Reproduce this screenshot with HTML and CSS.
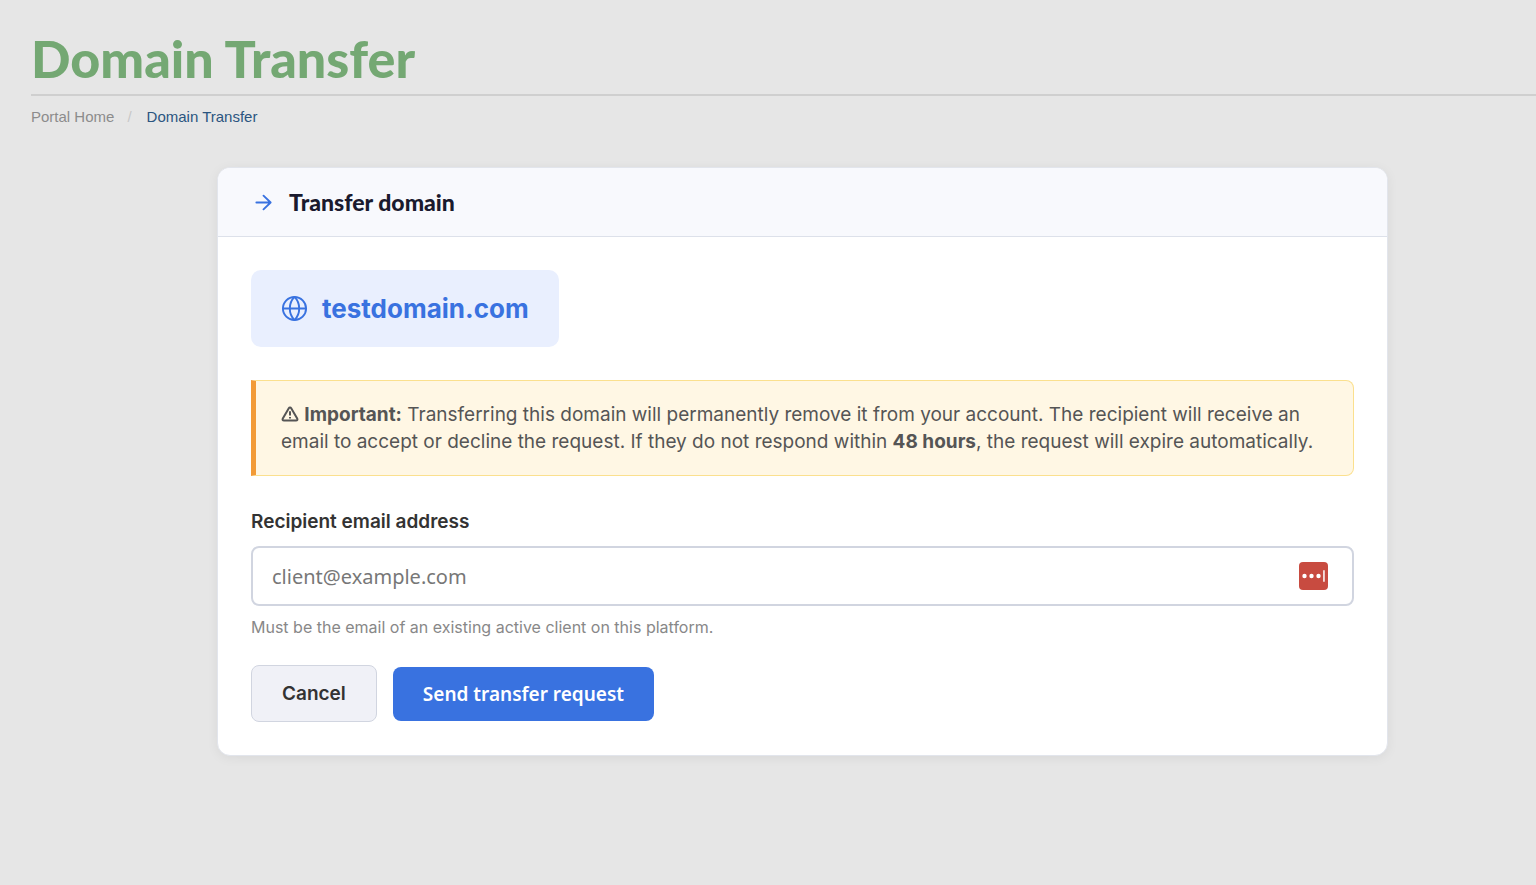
FILE: index.html
```html
<!DOCTYPE html>
<html lang="en">
<head>
<meta charset="utf-8">
<meta name="viewport" content="width=device-width, initial-scale=1">
<title>Domain Transfer</title>
<link rel="stylesheet" href="styles.css">
</head>
<body>
<header class="page-header">
  <h1 class="page-title">Domain Transfer</h1>
  <nav class="breadcrumb" aria-label="Breadcrumb">
    <a class="breadcrumb-link" href="#">Portal Home</a>
    <span class="breadcrumb-separator">/</span>
    <a class="breadcrumb-link breadcrumb-current" href="#" aria-current="page">Domain Transfer</a>
  </nav>
</header>
<main class="content">
  <section class="card">
    <div class="card-header">
      <svg class="arrow-icon" viewBox="0 0 20 20" aria-hidden="true"><path d="M2.500 10h15M10 2.800l7.500 7.200-7.500 7.200"/></svg>
      <h2 class="card-title">Transfer domain</h2>
    </div>
    <form class="card-body">
      <div class="domain">
        <svg class="globe-icon" viewBox="0 0 28 28" aria-hidden="true"><circle cx="14" cy="14" r="12"/><path d="M2 14h24M14 2c-6.500 6.500-6.500 17.500 0 24M14 2c6.500 6.500 6.500 17.500 0 24"/></svg>
        <span class="domain-name">testdomain.com</span>
      </div>
      <p class="notice">
        <svg class="warning-icon" viewBox="0 0 18 16" aria-hidden="true"><path class="warning-outline" d="M9 1.500c.5 0 .9.200 1.200.700l6 10.300c.6 1.100.1 2-1.200 2H3c-1.300 0-1.800-.9-1.200-2l6-10.300c.3-.5.700-.7 1.200-.7z"/><path class="warning-mark" d="M9 5.200v4.300M9 11v1.500"/></svg>
        <strong>Important:</strong> Transferring this domain will permanently remove it from your account. The recipient will receive an email to accept or decline the request. If they do not respond within <strong>48 hours</strong>, the request will expire automatically.
      </p>
      <div class="field">
        <label class="field-label" for="recipient">Recipient email address</label>
        <div class="input-wrap">
          <input class="field-input" id="recipient" type="email" placeholder="client@example.com" aria-describedby="recipient-hint">
          <button class="password-button" type="button" aria-label="Fill from password manager">
            <svg class="password-icon" viewBox="0 0 28 28" aria-hidden="true"><circle cx="5" cy="14" r="2.200"/><circle cx="12" cy="14" r="2.200"/><circle cx="19" cy="14" r="2.200"/><path d="M23.700 8.300h1.500v11.400h-1.500z"/></svg>
          </button>
        </div>
        <p class="field-hint" id="recipient-hint">Must be the email of an existing active client on this platform.</p>
      </div>
      <div class="actions">
        <button class="button button-cancel" type="button">Cancel</button>
        <button class="button button-send" type="submit">Send transfer request</button>
      </div>
    </form>
  </section>
</main>
</body>
</html>
```
FILE: styles.css
```css
* { box-sizing: border-box; }

body {
  margin: 0;
  min-height: 100vh;
  background: #e6e6e6;
  color: #555;
  font-family: Inter, "Liberation Sans", sans-serif;
}

.page-header { padding: 28px 0 0 31px; }

.page-title {
  margin: 0;
  padding-bottom: 6px;
  border-bottom: 2px solid #cfcfcf;
  color: #74a873;
  font: 900 52px/60px Lato, sans-serif;
}

.breadcrumb {
  display: flex;
  gap: 13px;
  padding-top: 11px;
  font: 15px/20px "Liberation Sans", sans-serif;
}

.breadcrumb-link { color: #8c8c8c; text-decoration: none; }
.breadcrumb-separator { color: #c8c8c8; }
.breadcrumb-current { margin-left: 2px; color: #2b5580; }

.content { padding: 40px 148px 40px 217px; }

.card {
  overflow: hidden;
  border: 1px solid #e2e5ec;
  border-radius: 13px;
  background: #fff;
  box-shadow: 0 2px 12px rgba(0, 0, 0, 0.06);
}

.card-header {
  display: flex;
  align-items: center;
  gap: 16px;
  padding: 19px 36px;
  border-bottom: 1px solid #dde1ea;
  background: #f8f9fd;
}

.arrow-icon {
  width: 19px;
  height: 19px;
  fill: none;
  stroke: #3972e0;
  stroke-width: 2;
  stroke-linecap: round;
  stroke-linejoin: round;
}

.card-title {
  margin: 0;
  color: #1a1a2e;
  font: 900 23px/30px Lato, sans-serif;
}

.card-body { padding: 33px; }

.domain {
  display: inline-flex;
  align-items: center;
  gap: 14px;
  padding: 19px 30px;
  border-radius: 10px;
  background: #e9effe;
  color: #3972e0;
}

.globe-icon {
  width: 27px;
  height: 27px;
  fill: none;
  stroke: currentColor;
  stroke-width: 2;
}

.domain-name { font-size: 26px; font-weight: 700; line-height: 39px; }

.notice {
  margin: 33px 0 0;
  padding: 20px 25px;
  border: 1px solid #fbe08e;
  border-left: 5px solid #f29b38;
  border-radius: 0 8px 8px 0;
  background: #fff7e4;
  font-size: 19px;
  line-height: 27px;
}

.warning-icon { width: 18px; height: 16px; vertical-align: -1px; }
.warning-outline { fill: none; stroke: currentColor; stroke-width: 2; }
.warning-mark { fill: none; stroke: currentColor; stroke-width: 2; }

.field { padding-top: 32px; }

.field-label {
  display: block;
  color: #333;
  font-size: 19px;
  font-weight: 600;
  line-height: 27px;
}

.input-wrap { position: relative; margin-top: 11px; }

.field-input {
  display: block;
  width: 100%;
  height: 60px;
  padding: 0 64px 0 19px;
  border: 2px solid #d1d5e0;
  border-radius: 8px;
  background: #fff;
  color: #333;
  font: 20px "Noto Sans", sans-serif;
}

.field-input::placeholder { color: #777; opacity: 1; }

.password-button {
  position: absolute;
  top: 16px;
  right: 26px;
  display: block;
  padding: 0;
  border: 0;
  border-radius: 4px;
  background: #c84b40;
}

.password-icon { display: block; width: 29px; height: 28px; fill: #fff; }

.field-hint {
  margin: 10px 0 0;
  color: #888;
  font-size: 16px;
  line-height: 22px;
}

.actions { display: flex; align-items: center; gap: 16px; margin-top: 27px; }

.button { border: 0; border-radius: 8px; }

.button-cancel {
  padding: 15px 30px;
  border: 1px solid #d1d5e0;
  background: #f0f1f7;
  color: #333;
  font: 600 19px/25px Inter, sans-serif;
}

.button-send {
  padding: 14px 30px;
  background: #3972e0;
  color: #fff;
  font: 600 19px/26px "Noto Sans", sans-serif;
}
```
